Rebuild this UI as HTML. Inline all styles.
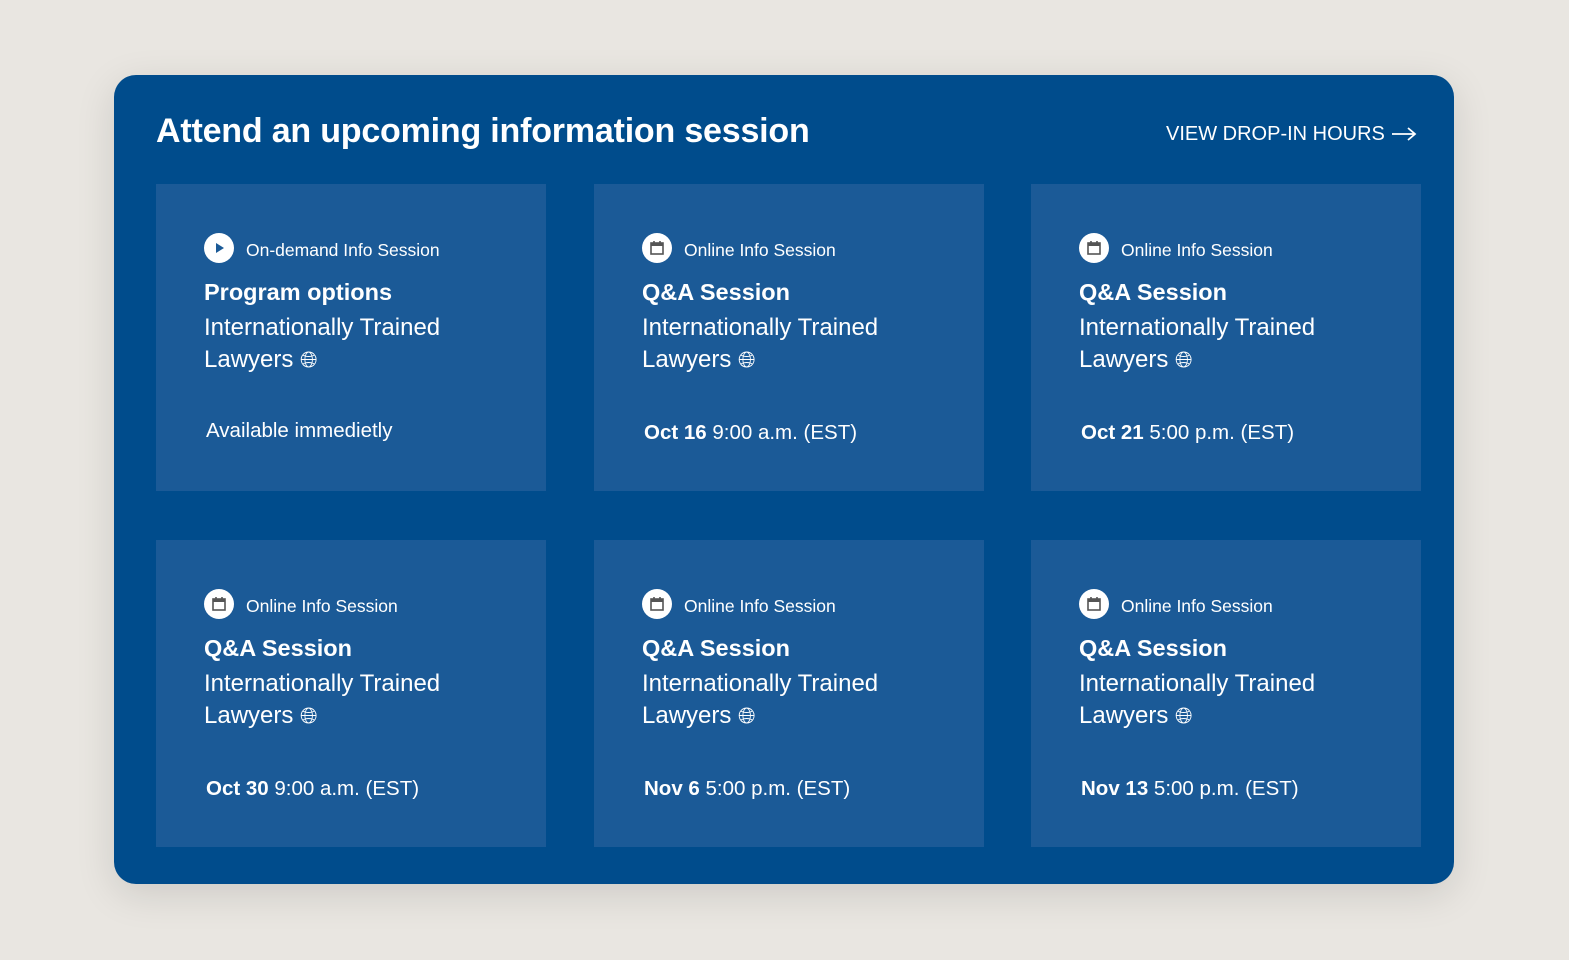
<!DOCTYPE html>
<html><head><style>
body{margin:0;background:#e9e6e1;width:1569px;height:960px;font-family:"Liberation Sans",sans-serif;overflow:hidden}
.panel{position:absolute;left:114px;top:75px;width:1340px;height:809px;background:#004c8c;border-radius:22px;box-shadow:0 10px 40px rgba(0,0,0,.12)}
h1{position:absolute;left:156px;top:109px;margin:0;color:#fff;font-size:34px;font-weight:bold;letter-spacing:-0.2px;line-height:44px}
.link{position:absolute;left:1166px;top:122px;color:#fff;font-size:20px;line-height:24px;display:flex;align-items:center;gap:6px;letter-spacing:0}
.card{position:absolute;width:390px;height:307px;background:#1b5a97;color:#fff}
.lab{position:absolute;left:48px;top:49px;display:flex;align-items:center;font-size:17.5px}
.lab span{position:relative;top:2px}
.ic{width:30px;height:30px;border-radius:50%;background:#fff;margin-right:12px;display:flex;align-items:center;justify-content:center}
.t{position:absolute;left:48px;top:95px;font-size:23.5px;font-weight:bold;letter-spacing:0}
.s{position:absolute;left:48px;top:128px;font-size:24px;line-height:32px;width:320px;letter-spacing:0}
.g{font-size:22px}
.d{position:absolute;left:50px;top:237px;font-size:20.5px}
</style></head><body>
<div class="panel"></div>
<h1>Attend an upcoming information session</h1>
<div class="link">VIEW DROP-IN HOURS <svg width="26" height="16" viewBox="0 0 26 16"><path d="M1 8H24M17 2l7 6-7 6" stroke="#fff" stroke-width="1.8" fill="none"/></svg></div>

<div class="card" style="left:156px;top:184px"><div class="lab"><div class="ic"><svg width="14" height="14" viewBox="0 0 14 14"><path d="M4 2l8 5-8 5z" fill="#1b5a97"/></svg></div><span>On-demand Info Session</span></div><div class="t">Program options</div><div class="s">Internationally Trained Lawyers <span class="g">&#127760;&#xFE0E;</span></div><div class="d" style="top:235px">Available immedietly</div></div>

<div class="card" style="left:594px;top:184px"><div class="lab"><div class="ic"><svg width="16" height="16" viewBox="0 0 16 16"><rect x="2" y="3" width="12" height="11" fill="none" stroke="#555" stroke-width="1.6"/><rect x="2" y="3" width="12" height="3" fill="#555"/><path d="M5 1v3M11 1v3" stroke="#555" stroke-width="1.6"/></svg></div><span>Online Info Session</span></div><div class="t">Q&amp;A Session</div><div class="s">Internationally Trained Lawyers <span class="g">&#127760;&#xFE0E;</span></div><div class="d"><b>Oct 16</b> 9:00 a.m. (EST)</div></div>

<div class="card" style="left:1031px;top:184px"><div class="lab"><div class="ic"><svg width="16" height="16" viewBox="0 0 16 16"><rect x="2" y="3" width="12" height="11" fill="none" stroke="#555" stroke-width="1.6"/><rect x="2" y="3" width="12" height="3" fill="#555"/><path d="M5 1v3M11 1v3" stroke="#555" stroke-width="1.6"/></svg></div><span>Online Info Session</span></div><div class="t">Q&amp;A Session</div><div class="s">Internationally Trained Lawyers <span class="g">&#127760;&#xFE0E;</span></div><div class="d"><b>Oct 21</b> 5:00 p.m. (EST)</div></div>

<div class="card" style="left:156px;top:540px"><div class="lab"><div class="ic"><svg width="16" height="16" viewBox="0 0 16 16"><rect x="2" y="3" width="12" height="11" fill="none" stroke="#555" stroke-width="1.6"/><rect x="2" y="3" width="12" height="3" fill="#555"/><path d="M5 1v3M11 1v3" stroke="#555" stroke-width="1.6"/></svg></div><span>Online Info Session</span></div><div class="t">Q&amp;A Session</div><div class="s">Internationally Trained Lawyers <span class="g">&#127760;&#xFE0E;</span></div><div class="d"><b>Oct 30</b> 9:00 a.m. (EST)</div></div>

<div class="card" style="left:594px;top:540px"><div class="lab"><div class="ic"><svg width="16" height="16" viewBox="0 0 16 16"><rect x="2" y="3" width="12" height="11" fill="none" stroke="#555" stroke-width="1.6"/><rect x="2" y="3" width="12" height="3" fill="#555"/><path d="M5 1v3M11 1v3" stroke="#555" stroke-width="1.6"/></svg></div><span>Online Info Session</span></div><div class="t">Q&amp;A Session</div><div class="s">Internationally Trained Lawyers <span class="g">&#127760;&#xFE0E;</span></div><div class="d"><b>Nov 6</b> 5:00 p.m. (EST)</div></div>

<div class="card" style="left:1031px;top:540px"><div class="lab"><div class="ic"><svg width="16" height="16" viewBox="0 0 16 16"><rect x="2" y="3" width="12" height="11" fill="none" stroke="#555" stroke-width="1.6"/><rect x="2" y="3" width="12" height="3" fill="#555"/><path d="M5 1v3M11 1v3" stroke="#555" stroke-width="1.6"/></svg></div><span>Online Info Session</span></div><div class="t">Q&amp;A Session</div><div class="s">Internationally Trained Lawyers <span class="g">&#127760;&#xFE0E;</span></div><div class="d"><b>Nov 13</b> 5:00 p.m. (EST)</div></div>
</body></html>
